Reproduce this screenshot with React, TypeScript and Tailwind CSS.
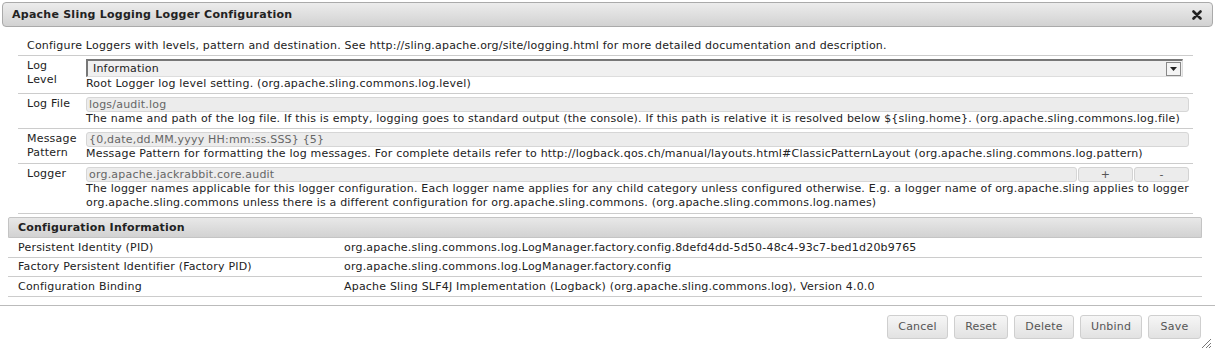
import React from "react";

const font = { fontFamily: '"DejaVu Sans", Verdana, sans-serif' };

interface Row { label: React.ReactNode; field: React.ReactNode; desc: React.ReactNode; }

function TextInput({ value }: { value: string }) {
  return (
    <div className="h-[15px] flex-1 rounded-[3px] border border-[#d6d6d6] bg-[#ececec] px-[2px] text-[11px] leading-[13px] text-[#666] overflow-hidden whitespace-nowrap">
      {value}
    </div>
  );
}

function SmallBtn({ children }: { children: React.ReactNode }) {
  return (
    <div className="h-[15px] w-[55px] rounded-[3px] border border-[#d3d3d3] bg-[#ececec] text-center text-[11px] leading-[13px] text-[#555]">
      {children}
    </div>
  );
}

function Button({ children, w }: { children: React.ReactNode; w: string }) {
  return (
    <button className={`h-[24px] ${w} rounded-[3px] border border-[#cfcfcf] bg-gradient-to-b from-[#f6f6f6] to-[#e2e2e2] text-[11px] tracking-[0.2px] text-[#555]`}>
      {children}
    </button>
  );
}

export default function App() {
  const rows: Row[] = [
    {
      label: <>Log<br />Level</>,
      field: (
        <div className="flex h-[18px] items-center border-t-2 border-l-2 border-[#777] border-r border-b border-r-[#ddd] border-b-[#ddd] bg-[#f0f0f0] mr-[6px]">
          <span className="flex-1 pl-[5px] text-[11px] text-[#222]">Information</span>
          <div className="mr-[1px] flex h-[14px] w-[15px] items-center justify-center border border-[#888] bg-[#f4f4f4]">
            <svg width="7" height="4" viewBox="0 0 7 4"><path d="M0 0h7L3.5 4z" fill="#222" /></svg>
          </div>
        </div>
      ),
      desc: "Root Logger log level setting. (org.apache.sling.commons.log.level)",
    },
    {
      label: "Log File",
      field: <div className="flex"><TextInput value="logs/audit.log" /></div>,
      desc: "The name and path of the log file. If this is empty, logging goes to standard output (the console). If this path is relative it is resolved below ${sling.home}. (org.apache.sling.commons.log.file)",
    },
    {
      label: <>Message<br />Pattern</>,
      field: <div className="flex"><TextInput value="{0,date,dd.MM.yyyy HH:mm:ss.SSS} {5}" /></div>,
      desc: "Message Pattern for formatting the log messages. For complete details refer to http://logback.qos.ch/manual/layouts.html#ClassicPatternLayout (org.apache.sling.commons.log.pattern)",
    },
    {
      label: "Logger",
      field: (
        <div className="flex gap-[1px]">
          <TextInput value="org.apache.jackrabbit.core.audit" />
          <SmallBtn>+</SmallBtn>
          <SmallBtn>-</SmallBtn>
        </div>
      ),
      desc: "The logger names applicable for this logger configuration. Each logger name applies for any child category unless configured otherwise. E.g. a logger name of org.apache.sling applies to logger org.apache.sling.commons unless there is a different configuration for org.apache.sling.commons. (org.apache.sling.commons.log.names)",
    },
  ];

  const info = [
    ["Persistent Identity (PID)", "org.apache.sling.commons.log.LogManager.factory.config.8defd4dd-5d50-48c4-93c7-bed1d20b9765"],
    ["Factory Persistent Identifier (Factory PID)", "org.apache.sling.commons.log.LogManager.factory.config"],
    ["Configuration Binding", "Apache Sling SLF4J Implementation (Logback) (org.apache.sling.commons.log), Version 4.0.0"],
  ];

  return (
    <div className="relative h-[351px] w-[1215px] bg-white text-[11px] leading-[14px] tracking-[0.2px] text-[#222]" style={font}>
      <div className="px-[2px] pt-[2px]">
        <div className="flex h-[25px] items-center justify-between rounded-[4px] border border-[#aaa] bg-gradient-to-b from-[#ececec] to-[#d2d2d2] pl-[9px] pr-[9px]">
          <span className="font-bold tracking-[0.25px] text-[#222]">Apache Sling Logging Logger Configuration</span>
          <svg width="10" height="10" viewBox="0 0 10 10" className="mr-[1px]">
            <path d="M1.5 1.5L8.5 8.5M8.5 1.5L1.5 8.5" stroke="#222" strokeWidth="2.6" strokeLinecap="round" />
          </svg>
        </div>
      </div>

      <div className="pl-[18px] pr-[22px] pt-[11px]">
        <div className="border-b border-[#ccc] pb-[2px] pl-[9px] pt-[1px]">
          Configure Loggers with levels, pattern and destination. See http://sling.apache.org/site/logging.html for more detailed documentation and description.
        </div>
        {rows.map((r, i) => (
          <div key={i} className={`flex border-b border-[#ccc] pt-[3px] ${i === 3 ? "pb-[3px]" : "pb-[2px]"}`}>
            <div className="w-[68px] shrink-0 pl-[9px]">{r.label}</div>
            <div className="flex-1 pr-[4px]">
              {r.field}
              <div>{r.desc}</div>
            </div>
          </div>
        ))}
      </div>

      <div className="px-[8px] pt-[3px] pr-[13px]">
        <div className="flex h-[21px] items-center rounded-tl-[2px] rounded-tr-[2px] border border-[#c4c4c4] bg-gradient-to-b from-[#e8e8e8] to-[#d2d2d2] pl-[9px] font-bold">
          Configuration Information
        </div>
        {info.map(([k, v]) => (
          <div key={k} className="flex h-[19.5px] items-center border-b border-[#ccc] pl-[10px] pt-[1px]">
            <div className="w-[326px] shrink-0">{k}</div>
            <div>{v}</div>
          </div>
        ))}
      </div>

      <div className="mt-[8px] flex justify-end gap-[6px] border-t border-[#bbb] pr-[14px] pt-[9px]">
        <Button w="w-[61px]">Cancel</Button>
        <Button w="w-[54px]">Reset</Button>
        <Button w="w-[60px]">Delete</Button>
        <Button w="w-[62px]">Unbind</Button>
        <Button w="w-[53px]">Save</Button>
      </div>

      <svg className="absolute bottom-[2px] right-[3px]" width="11" height="11" viewBox="0 0 11 11">
        <path d="M10 1L1 10M10 5L5 10M10 8L8 10" stroke="#777" strokeWidth="1" />
      </svg>
    </div>
  );
}
